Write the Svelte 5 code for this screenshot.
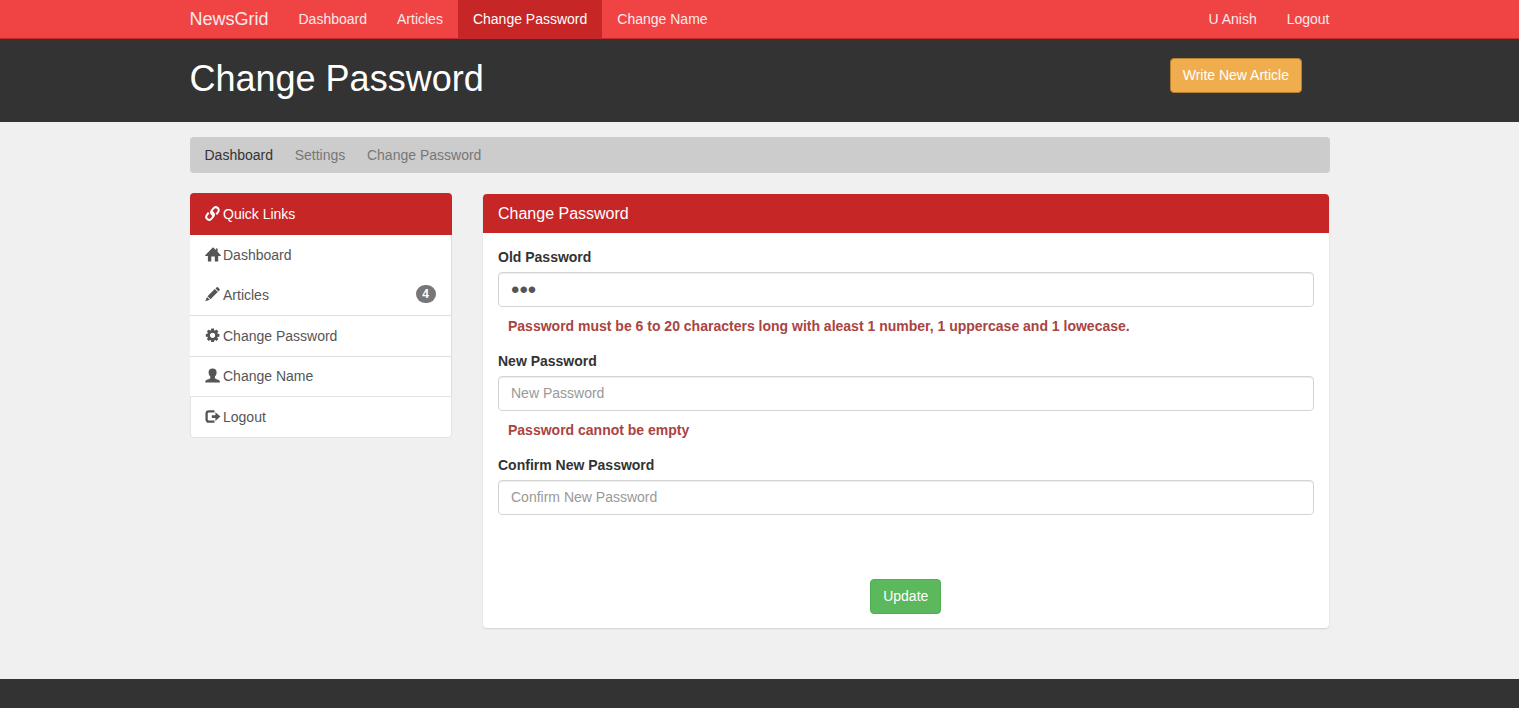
<script>
  const nav = ['Dashboard', 'Articles', 'Change Password', 'Change Name'];
  const account = ['U Anish', 'Logout'];
  const links = [
    { icon: 'link', label: 'Quick Links', kind: 'main' },
    { icon: 'home', label: 'Dashboard', kind: 'plain' },
    { icon: 'pencil', label: 'Articles', kind: 'articles', badge: 4 },
    { icon: 'cog', label: 'Change Password', kind: 'ruled' },
    { icon: 'user', label: 'Change Name', kind: 'ruled name' },
    { icon: 'logout', label: 'Logout', kind: 'last' }
  ];
  const teeth = [0, 45, 90, 135, 180, 225, 270, 315];
  let oldPassword = $state('abc');
  let newPassword = $state('');
  let confirmPassword = $state('');
</script>

{#snippet icon(name)}
  <svg class="icon" viewBox="0 0 16 16" aria-hidden="true">
    {#if name === 'link'}
      <g fill="none" stroke="currentColor" stroke-width="2">
        <path d="M8.3 9.3C6.200 8.200 5.400 6.300 6.500 4.900L8.300 2.500C9.400 1.100 11.200.8 12.600 1.900 14 3 14.100 4.700 13 6.100L11.300 8.300" />
        <path d="M6.700 5.700C8.800 6.800 9.600 8.700 8.500 10.100L6.700 12.500C5.600 13.900 3.800 14.200 2.400 13.100 1 12 .9 10.300 2 8.900L3.700 6.700" />
      </g>
    {:else if name === 'home'}
      <path fill="currentColor" d="M8 .2 10.900 3.100V1.600h1.700v3.200l3.200 3.400v.9H13.200V14.600H9.800V9.600H6.300v5H2.900V9.100H.2v-.9z" />
    {:else if name === 'pencil'}
      <path fill="currentColor" d="M.3 14.300 1.900 9.900l2.900 2.900zM2.500 9.300l7.300-7.200 3 3-7.300 7.200zM10.500 1.400l.9-.9q.9-.8 1.800 0l1.200 1.200q.8.9 0 1.800l-.9.9z" />
    {:else if name === 'cog'}
      <g fill="currentColor">
        {#each teeth as angle}
          <path d="M5.800 4.500 6.200.5h2.800l.4 4z" transform="rotate({angle} 7.6 7.300)" />
        {/each}
      </g>
      <circle cx="7.6" cy="7.300" r="4" fill="none" stroke="currentColor" stroke-width="2.700" />
    {:else if name === 'user'}
      <path fill="currentColor" d="M7.6.4c2.700 0 4.100 1.400 4 3.900 0 2-.7 3.400-1.700 4.300v1.700c.3.800 4.700 1.500 5 3v1.300H.3v-1.300c.3-1.500 4.700-2.200 5-3V8.600C4.300 7.700 3.600 6.300 3.600 4.300 3.500 1.800 4.900.4 7.600.4z" />
    {:else}
      <path fill="none" stroke="currentColor" stroke-width="2.300" d="M9.500 2.300H4Q1.600 2.300 1.600 4.500v5.700Q1.600 12.700 4 12.700h5.500" />
      <path fill="currentColor" d="M6.800 6.300h3.600V3.300l5 4.300-5 4.300V8.900H6.800z" />
    {/if}
  </svg>
{/snippet}

<div class="page">
  <nav class="navbar">
    <div class="container nav-inner">
      <a class="brand" href="#top">NewsGrid</a>
      <ul class="menu">
        {#each nav as item}
          <li class:active={item === 'Change Password'}><a href="#top">{item}</a></li>
        {/each}
      </ul>
      <ul class="menu right">
        {#each account as item}
          <li><a href="#top">{item}</a></li>
        {/each}
      </ul>
    </div>
  </nav>
  <header>
    <div class="container head-inner">
      <h1>Change Password</h1>
      <button class="btn warning">Write New Article</button>
    </div>
  </header>
  <main class="container">
    <ol class="breadcrumb">
      <li class="first">Dashboard</li>
      <li>Settings</li>
      <li>Change Password</li>
    </ol>
    <div class="columns">
      <aside class="list">
        {#each links as link}
          <a class="item {link.kind}" href="#top">
            {@render icon(link.icon)}
            <span>{link.label}</span>
            {#if link.badge}<span class="badge">{link.badge}</span>{/if}
          </a>
        {/each}
      </aside>
      <section class="panel">
        <h3>Change Password</h3>
        <form onsubmit={(e) => e.preventDefault()}>
          <label for="old">Old Password</label>
          <input class="filled" id="old" type="password" bind:value={oldPassword} />
          <p class="error">Password must be 6 to 20 characters long with aleast 1 number, 1 uppercase and 1 lowecase.</p>
          <label for="new">New Password</label>
          <input id="new" type="password" placeholder="New Password" bind:value={newPassword} />
          <p class="error">Password cannot be empty</p>
          <label for="confirm">Confirm New Password</label>
          <input id="confirm" type="password" placeholder="Confirm New Password" bind:value={confirmPassword} />
          <button class="btn success">Update</button>
        </form>
      </section>
    </div>
  </main>
  <footer></footer>
</div>

<style>
  :global(body) { background: #f0f0f0; overflow: hidden; }
  .page, .page * { box-sizing: border-box; }
  .page {
    height: 708px;
    display: flex;
    flex-direction: column;
    font: 14px/20px "Liberation Sans", Arial, sans-serif;
    color: #333;
    background: #f0f0f0;
  }
  a { color: inherit; text-decoration: none; }
  ul, ol { list-style: none; margin: 0; padding: 0; }
  .container { width: 1140px; margin: 0 auto; }
  .navbar { height: 39px; background: #f04444; border-bottom: 1px solid #c82727; color: #f8eaea; }
  .nav-inner { display: flex; height: 38px; }
  .brand { font-size: 18px; line-height: 38px; width: 94px; }
  .menu { display: flex; }
  .menu a { display: block; padding: 0 15px; line-height: 38px; }
  .menu .active { background: #c62626; color: #fff; }
  .right { margin-left: auto; margin-right: -15px; }
  header { height: 83px; background: #333; }
  .head-inner { display: flex; justify-content: space-between; padding-right: 27.5px; }
  h1 { font-size: 36px; line-height: 40px; font-weight: 400; margin: 20px 0 0; color: #fff; }
  .btn {
    height: 35px;
    padding: 0 12px 2px;
    border: 1px solid;
    border-radius: 4px;
    color: #fff;
    font: inherit;
  }
  .warning { margin-top: 19px; background: #f0ad4e; border-color: #b9802f; }
  .breadcrumb {
    display: flex;
    gap: 21.7px;
    height: 36px;
    margin-top: 15px;
    padding: 8px 15px;
    background: #ccc;
    border-radius: 4px;
    color: #777;
  }
  .first { color: #333; }
  .columns { display: grid; grid-template-columns: 262px 846.5px; column-gap: 31px; align-items: start; margin-top: 20px; }
  .list { height: 245px; display: grid; grid-template-rows: 42px 40px 40px 41px 40px 42px; }
  .item { display: flex; align-items: center; padding: 0 15px; background: #fff; color: #555; border: solid #ddd; border-width: 0 1px 0 0; }
  .icon { width: 16px; height: 16px; flex: none; margin: -1px 2.5px 0 0; }
  .main { background: #c62626; color: #fff; border: 0; border-radius: 4px 4px 0 0; }
  .ruled { border-top-width: 1px; }
  .name { padding-bottom: 1px; }
  .last { border-width: 1px; border-color: #e3e3e3; border-radius: 0 0 4px 4px; padding: 0 15px 0 14px; }
  .badge {
    margin: -2px 0 0 auto;
    width: 20px;
    height: 18px;
    border-radius: 9px;
    background: #777;
    color: #fff;
    font-size: 12px;
    font-weight: 700;
    line-height: 19px;
    text-align: center;
  }
  .panel { margin-top: 1px; height: 434px; background: #fff; border-radius: 4px; box-shadow: 0 1px 2px rgba(0, 0, 0, .13); }
  h3 { margin: 0; height: 39px; padding: 0 15.5px; font-size: 16px; line-height: 40px; font-weight: 400; color: #fff; background: #c62626; border-radius: 4px 4px 0 0; }
  form { display: flex; flex-direction: column; padding: 14px 15.5px 0; }
  label { font-weight: 700; height: 25px; }
  input {
    height: 35px;
    padding: 0 12px 2px;
    border: 1px solid #d4d4d4;
    border-radius: 4px;
    outline: 0;
    background: #fff;
    color: #555;
    font: inherit;
    box-shadow: inset 0 1px 1px rgba(0, 0, 0, .075);
  }
  .filled { font-size: 24px; padding-bottom: 0; }
  input::placeholder { color: #999; opacity: 1; }
  .error { margin: 0; height: 44px; padding: 9px 10px 0; font-weight: 700; color: #a94442; }
  .success { align-self: center; margin-top: 64px; background: #5cb85c; border-color: #4fae4f; }
  footer { height: 29px; margin-top: auto; background: #333; }
</style>
